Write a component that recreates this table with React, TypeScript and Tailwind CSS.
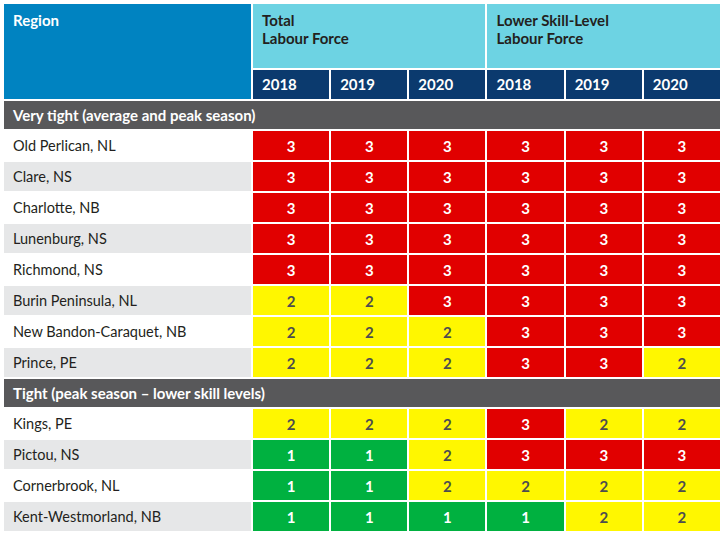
import React from "react";

type Row = { name: string; vals: number[] };

const section1: Row[] = [
  { name: "Old Perlican, NL", vals: [3, 3, 3, 3, 3, 3] },
  { name: "Clare, NS", vals: [3, 3, 3, 3, 3, 3] },
  { name: "Charlotte, NB", vals: [3, 3, 3, 3, 3, 3] },
  { name: "Lunenburg, NS", vals: [3, 3, 3, 3, 3, 3] },
  { name: "Richmond, NS", vals: [3, 3, 3, 3, 3, 3] },
  { name: "Burin Peninsula, NL", vals: [2, 2, 3, 3, 3, 3] },
  { name: "New Bandon-Caraquet, NB", vals: [2, 2, 2, 3, 3, 3] },
  { name: "Prince, PE", vals: [2, 2, 2, 3, 3, 2] },
];

const section2: Row[] = [
  { name: "Kings, PE", vals: [2, 2, 2, 3, 2, 2] },
  { name: "Pictou, NS", vals: [1, 1, 2, 3, 3, 3] },
  { name: "Cornerbrook, NL", vals: [1, 1, 2, 2, 2, 2] },
  { name: "Kent-Westmorland, NB", vals: [1, 1, 1, 1, 2, 2] },
];

const years = ["2018", "2019", "2020", "2018", "2019", "2020"];

function Cell({ v }: { v: number }) {
  const cls =
    v === 3
      ? "bg-[#e10000] text-white"
      : v === 2
      ? "bg-[#fff700] text-[#4d4d4f]"
      : "bg-[#00b140] text-white";
  return (
    <div className={`${cls} h-[29px] flex items-center justify-center pt-[1px] font-bold text-[15px]`}>
      {v}
    </div>
  );
}

function Rows({ rows }: { rows: Row[] }) {
  return (
    <>
      {rows.map((r, i) => (
        <React.Fragment key={r.name}>
          <div
            className={`h-[29px] flex items-center pl-[9px] pt-[1px] text-[14.5px] text-[#231f20] ${
              i % 2 === 1 ? "bg-[#e6e7e8]" : "bg-white"
            }`}
          >
            {r.name}
          </div>
          {r.vals.map((v, j) => (
            <Cell key={j} v={v} />
          ))}
        </React.Fragment>
      ))}
    </>
  );
}

export default function App() {
  return (
    <div
      className="w-[726px] h-[535px] bg-white pt-[4px] pl-[4px] overflow-hidden"
      style={{ fontFamily: "Lato, 'Liberation Sans', sans-serif" }}
    >
      <div className="w-[716px] grid grid-cols-[247px_repeat(6,1fr)] gap-[2px]">
        <div className="row-span-2 bg-[#0083c1] text-white font-bold text-[15px] leading-[18px] pl-[9px] pt-[7px]">
          Region
        </div>
        <div className="col-span-3 h-[64px] bg-[#6dd3e3] text-[#231f20] font-bold text-[15px] leading-[18px] pl-[9px] pt-[7px]">
          Total
          <br />
          Labour Force
        </div>
        <div className="col-span-3 h-[64px] bg-[#6dd3e3] text-[#231f20] font-bold text-[15px] leading-[18px] pl-[9px] pt-[7px]">
          Lower Skill-Level
          <br />
          Labour Force
        </div>
        {years.map((y, i) => (
          <div
            key={i}
            className="h-[29px] bg-[#0b3a6e] text-white font-bold text-[15px] flex items-center pl-[9px]"
          >
            {y}
          </div>
        ))}
        <div className="col-span-7 h-[28px] bg-[#58585a] text-white font-bold text-[15px] flex items-center pl-[9px]">
          Very tight (average and peak season)
        </div>
        <Rows rows={section1} />
        <div className="col-span-7 h-[28px] bg-[#58585a] text-white font-bold text-[15px] flex items-center pl-[9px]">
          Tight (peak season – lower skill levels)
        </div>
        <Rows rows={section2} />
      </div>
    </div>
  );
}
